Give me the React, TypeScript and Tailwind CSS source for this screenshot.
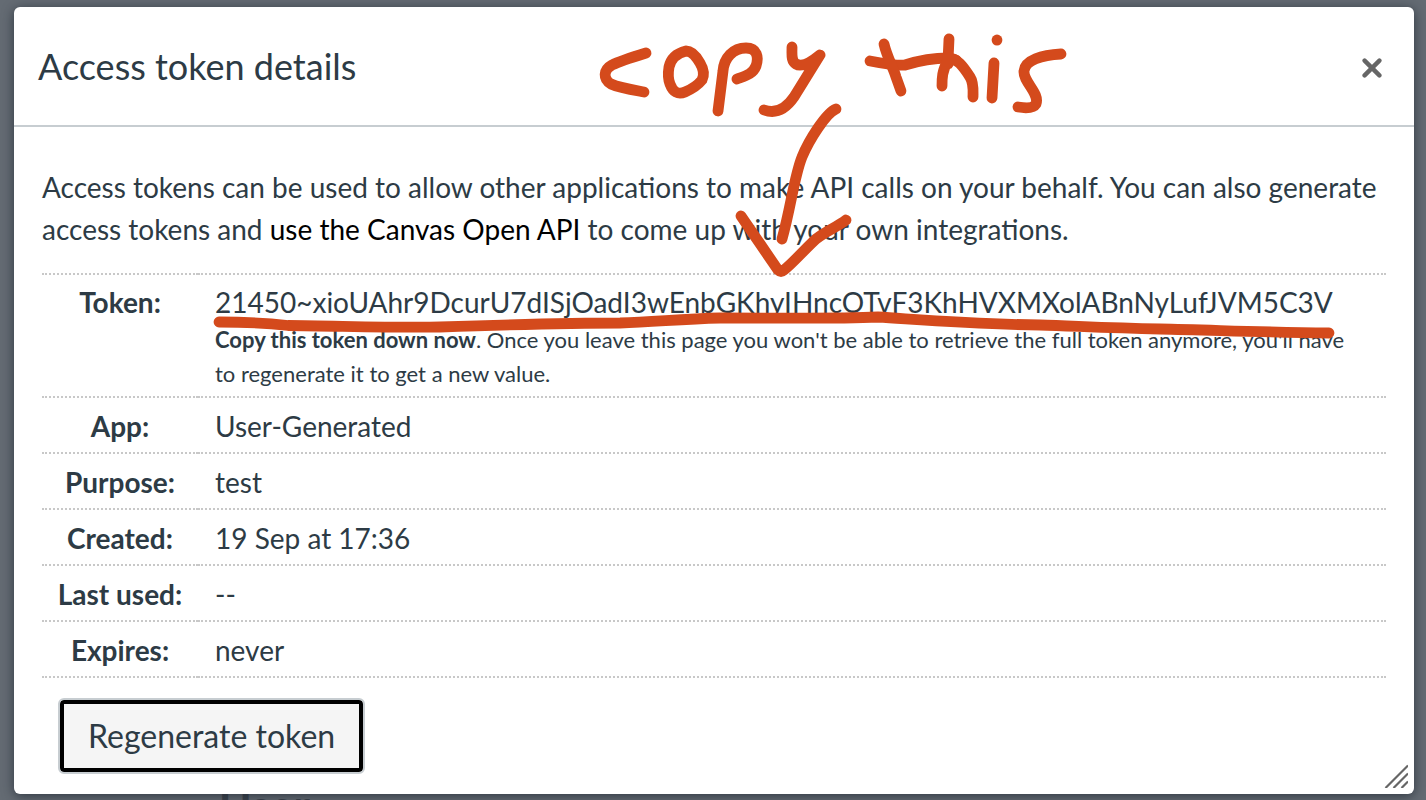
import React from "react";

const rows = [
  { label: "App:", value: "User-Generated" },
  { label: "Purpose:", value: "test" },
  { label: "Created:", value: "19 Sep at 17:36" },
  { label: "Last used:", value: "--" },
  { label: "Expires:", value: "never" },
];

function CloseIcon() {
  return (
    <svg viewBox="0 0 20 20" className="size-5" fill="none" stroke="#666666" strokeWidth="4.4" strokeLinecap="round" aria-hidden="true">
      <path d="M2.6 2.6 17.4 17.4M17.4 2.6 2.6 17.4" />
    </svg>
  );
}

function ResizeGrip() {
  return (
    <svg viewBox="0 0 24 24" className="absolute right-1.5 bottom-1.5 size-6" fill="none" stroke="#666666" strokeWidth="2.2" aria-hidden="true">
      <path d="M1.5 24 24 1.5M9.5 24 24 9.5M17.5 24 24 17.5" />
    </svg>
  );
}

function Annotation() {
  return (
    <svg
      viewBox="0 0 1426 800"
      className="pointer-events-none absolute top-0 left-0 h-[800px] w-[1426px]"
      fill="none"
      stroke="#d44a1c"
      strokeWidth="10.8"
      strokeLinecap="round"
      strokeLinejoin="round"
      aria-hidden="true"
    >
      <path d="M646 53 C633 57 620 61 612 65 C603 70 603 79 611 84 C620 88 633 90 644 92" />
      <path d="M686 51 C678 53 671 58 669 67 C668 73 668 79 670 84 C673 92 678 95 685 92 C692 89 698 85 702 80 C705 74 703 68 700 63 C696 56 691 51 686 51 Z" />
      <path d="M718 111 L723 71 C724 58 733 48 746 48 C757 48 759 57 756 66 C753 74 745 76 737 79" />
      <path d="M792 47 C792 55 791 61 796 64 C801 67 809 64 820 55 L794 97 C785 110 775 114 764 110" />
      <path d="M870 61 C883 63 893 66 905 65 C921 60 933 58 948 58 C957 58 963 66 970 77 C974 83 973 92 973 97" />
      <path d="M884 44 C887 57 893 67 896 77 L901 91" />
      <path d="M949 39 L948 61 C942 70 942 79 942 86 M948 64 C950 60 953 59 956 60" />
      <path d="M994 63 L992 98" />
      <path d="M997 40 V40.1" />
      <path d="M1061 54 C1042 55 1025 60 1024 71 C1023 82 1040 93 1036 104 C1033 109 1024 108 1018 107" />
      <path d="M836 109 C826 113 809 140 802 157 C794 177 791 207 782 239" />
      <path d="M741 216 L778 270 Q781 273 784 270 C793 263 804 250 816 239 C826 231 837 227 846 220" />
      <path d="M219 322 C245 322 265 323 288 325.5 C340 326 400 328 440 327 C500 325 560 323 620 323 C655 322 680 319 720 318 C780 318 835 319 878 317 C925 320 970 324 1040 325 C1075 326 1105 328 1160 329 C1210 330 1260 332 1329 333" />
    </svg>
  );
}

export default function App() {
  return (
    <div className="relative min-h-screen overflow-hidden bg-[#646b73] pt-[7px] pr-3 pb-1.5 pl-3.5 font-['Lato',sans-serif] text-[28px] leading-[42px] text-[#2d3b45]">
      <p className="absolute top-[784px] left-[219px] text-[44px] leading-[42px] font-bold text-[#3a424b]">User</p>
      <section
        role="dialog"
        aria-labelledby="dialog-title"
        className="relative rounded-md bg-white pb-5 shadow-[0_2px_12px_rgba(30,38,48,0.75)]"
      >
        <header className="flex items-center justify-between border-b-2 border-[#c7cdd1] px-6 py-8">
          <h1 id="dialog-title" className="text-[36px] leading-[54px]">Access token details</h1>
          <button type="button" aria-label="Close" className="mt-1 mr-2">
            <CloseIcon />
          </button>
        </header>
        <div className="px-7 pt-[39px]">
          <p>
            Access tokens can be used to allow other applications to make API calls on your behalf. You can also generate access tokens and{" "}
            <a href="#api" className="text-black">use the Canvas Open API</a> to come up with your own integrations.
          </p>
          <table className="mt-[23px] w-full border-collapse">
            <tbody>
              <tr className="border-y-2 border-dotted border-[#c8c8c8] align-top">
                <th scope="row" className="w-[156px] pt-1.5 pb-[5px] text-center font-bold">Token:</th>
                <td className="pt-1.5 pr-6 pb-[5px] pl-[17px]">
                  <div>21450~xioUAhr9DcurU7dISjOadI3wEnbGKhyIHncOTvF3KhHVXMXolABnNyLufJVM5C3V</div>
                  <div className="text-[22px] leading-[34px]">
                    <b>Copy this token down now</b>. Once you leave this page you won't be able to retrieve the full token anymore, you'll have to regenerate it to get a new value.
                  </div>
                </td>
              </tr>
              {rows.map((row) => (
                <tr key={row.label} className="border-b-2 border-dotted border-[#c8c8c8]">
                  <th scope="row" className="pt-[7px] pb-[5px] text-center font-bold">{row.label}</th>
                  <td className="pt-[7px] pr-6 pb-[5px] pl-[17px]">{row.value}</td>
                </tr>
              ))}
            </tbody>
          </table>
          <button
            type="button"
            className="mt-5 ml-4 rounded-md border-2 border-[#c7cdd1] bg-[#f5f5f5] px-7 py-[15px] text-[32px] leading-[42px] shadow-[inset_0_0_0_4px_#000]"
          >
            Regenerate token
          </button>
        </div>
        <ResizeGrip />
      </section>
      <Annotation />
    </div>
  );
}
